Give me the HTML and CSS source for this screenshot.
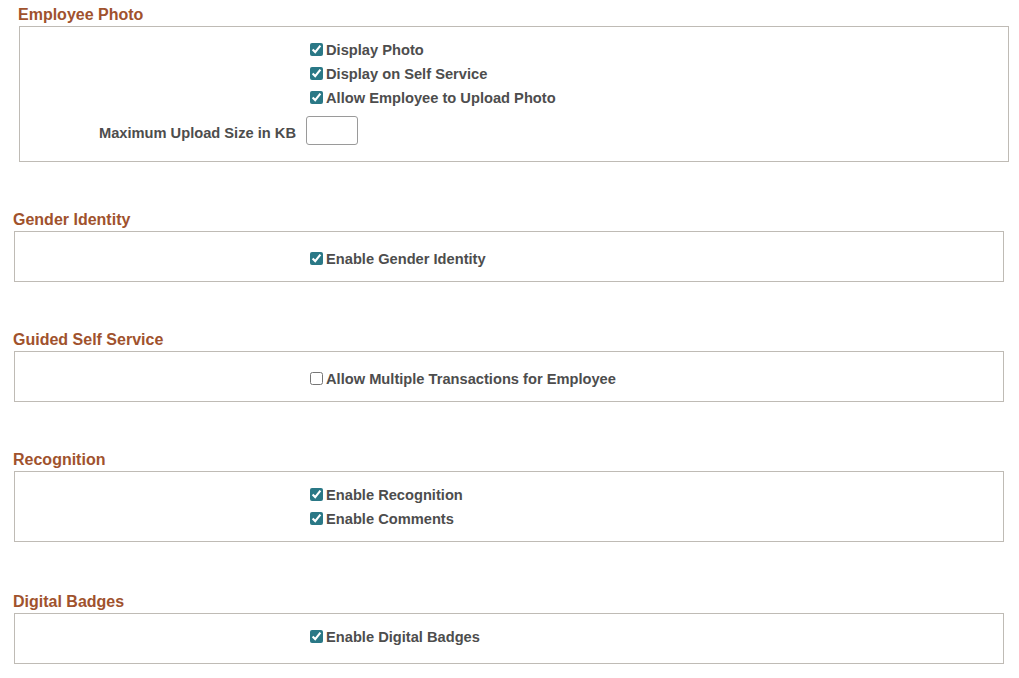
FILE: index.html
```html
<!DOCTYPE html>
<html lang="en">
<head>
    <meta charset="UTF-8">
    <meta name="viewport" content="width=device-width, initial-scale=1.0">
    <link rel="stylesheet" href="styles.css">
    <title>Person Options</title>
</head>
<body>
    <div class="section photo">
        <h2 class="section-title">Employee Photo</h2>
        <div class="group photo">
            <div class="field">
                <span class="field-label"></span>
                <label class="check"><input type="checkbox" checked> Display Photo</label>
            </div>
            <div class="field">
                <span class="field-label"></span>
                <label class="check"><input type="checkbox" checked> Display on Self Service</label>
            </div>
            <div class="field">
                <span class="field-label"></span>
                <label class="check"><input type="checkbox" checked> Allow Employee to Upload Photo</label>
            </div>
            <div class="field input-row">
                <label class="field-label" for="maxSize">Maximum Upload Size in KB</label>
                <input class="text-input" id="maxSize" type="text">
            </div>
        </div>
    </div>

    <div class="section">
        <h2 class="section-title">Gender Identity</h2>
        <div class="group">
            <div class="field">
                <span class="field-label"></span>
                <label class="check"><input type="checkbox" checked> Enable Gender Identity</label>
            </div>
        </div>
    </div>

    <div class="section">
        <h2 class="section-title">Guided Self Service</h2>
        <div class="group">
            <div class="field">
                <span class="field-label"></span>
                <label class="check"><input type="checkbox"> Allow Multiple Transactions for Employee</label>
            </div>
        </div>
    </div>

    <div class="section">
        <h2 class="section-title">Recognition</h2>
        <div class="group multi">
            <div class="field">
                <span class="field-label"></span>
                <label class="check"><input type="checkbox" checked> Enable Recognition</label>
            </div>
            <div class="field">
                <span class="field-label"></span>
                <label class="check"><input type="checkbox" checked> Enable Comments</label>
            </div>
        </div>
    </div>

    <div class="section badges">
        <h2 class="section-title">Digital Badges</h2>
        <div class="group badges">
            <div class="field">
                <span class="field-label"></span>
                <label class="check"><input type="checkbox" checked> Enable Digital Badges</label>
            </div>
        </div>
    </div>
</body>
</html>
```

FILE: styles.css
```css
body {
    font-family: 'Liberation Sans', Arial, sans-serif;
    background-color: #fff;
    color: #4d4d4d;
    margin: 0;
    padding-top: 6px;
}

.section {
    margin: 49px 0 0 13px;
}

.section.photo {
    margin: 0 0 0 18px;
}

.section.badges {
    margin-top: 51px;
}

.section-title {
    font-size: 16px;
    line-height: 18px;
    font-weight: bold;
    color: #a0522d;
    margin: 0 0 2px 0;
}

.group {
    box-sizing: border-box;
    width: 990px;
    margin-left: 1px;
    border: 1px solid #bfbbb5;
    padding: 14px 0 11px 5px;
}

.group.photo {
    padding: 10px 0 16px 0;
}

.group.multi {
    padding: 10px 0 11px 5px;
}

.group.badges {
    padding: 10px 0 15px 5px;
}

.field {
    display: grid;
    grid-template-columns: 276px auto;
    column-gap: 10px;
    align-items: center;
    height: 24px;
}

.field-label {
    font-size: 14.67px;
    font-weight: bold;
    text-align: right;
}

.check {
    display: flex;
    align-items: center;
    padding-top: 2px;
    font-size: 14.67px;
    font-weight: bold;
    white-space: nowrap;
}

.check input {
    width: 13px;
    height: 13px;
    margin: 0 3px 2px 4px;
    accent-color: #2a7886;
}

.input-row {
    height: 29px;
    margin-top: 7px;
    align-items: end;
}

.input-row .field-label {
    padding-bottom: 4px;
}

.text-input {
    box-sizing: border-box;
    width: 52px;
    height: 29px;
    border: 1px solid #9a9a9a;
    border-radius: 3px;
    padding: 0 4px;
    font-family: inherit;
    font-size: 14.67px;
}
```
